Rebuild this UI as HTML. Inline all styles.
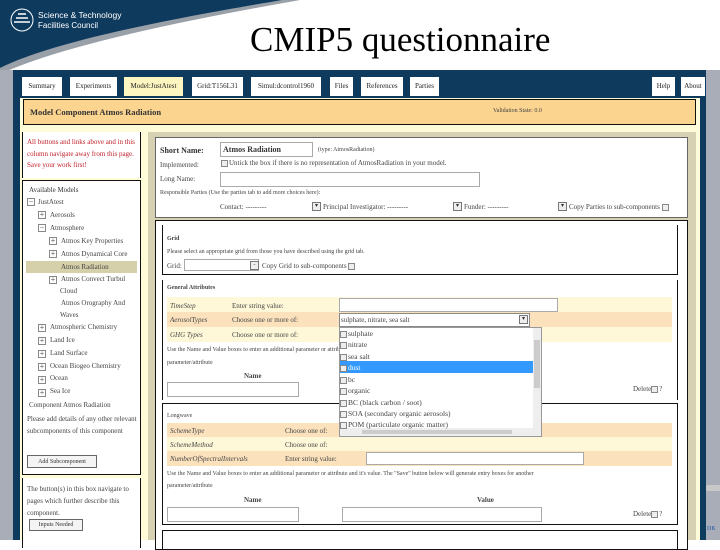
<!DOCTYPE html>
<html><head><meta charset="utf-8"><style>
*{margin:0;padding:0;box-sizing:border-box}
body{width:720px;height:540px;overflow:hidden;background:#fff;position:relative;font-family:"Liberation Serif",serif;font-size:7px;color:#333}
.a{position:absolute}
.nb{position:absolute;top:77px;height:19px;background:#fff;font-size:7px;line-height:19px;text-align:center;color:#222}
.t{position:absolute;font-size:7px;color:#444;white-space:nowrap}
.box{position:absolute;background:#fff;border:1.5px solid #111}
.inp{position:absolute;background:#fff;border:1px solid #aaa}
.dd{position:absolute;width:9px;height:9px;border:1px solid #777;background:#eee;font-size:6px;line-height:7px;text-align:center}
.cb{display:inline-block;width:7px;height:7px;border:1px solid #888;background:#eee;vertical-align:middle;margin-right:1px}
.pl{position:absolute;width:8px;height:8px;border:1px solid #888;font-size:8px;line-height:6px;text-align:center;color:#444}
</style></head><body>
<svg class="a" style="left:0;top:0" width="720" height="75">
<path d="M0,0 H300 C210,16 70,42 0,74 Z" fill="#9aa0a8"/>
<path d="M0,0 H282 C200,14 60,38 0,68 Z" fill="#0e3a5e"/>
<circle cx="22" cy="20" r="11" fill="none" stroke="#fff" stroke-width="1"/>
<path d="M14,22 h16 M16,18 h12 M18,14 h8" stroke="#fff" stroke-width="1.5"/>
<text x="38" y="18" fill="#fff" font-family="Liberation Sans" font-size="8.5">Science &amp; Technology</text>
<text x="38" y="28" fill="#fff" font-family="Liberation Sans" font-size="8">Facilities Council</text>
</svg>
<div class="a" style="left:250px;top:20px;font-size:35px;color:#000;font-family:'Liberation Serif',serif;white-space:nowrap">CMIP5 questionnaire</div>
<div class="a" style="left:0;top:70px;width:13px;height:470px;background:#a9adb8"></div>
<div class="a" style="left:706px;top:70px;width:14px;height:470px;background:#a9adb8"></div>
<div class="a" style="left:700px;top:485px;width:20px;height:6px;background:#c8c8c8"></div>
<div class="a" style="left:13px;top:70px;width:693px;height:470px;background:#0e3a5e"></div>
<div class="nb" style="left:22px;width:40px">Summary</div>
<div class="nb" style="left:70px;width:47px">Experiments</div>
<div class="nb" style="left:124px;width:59px;background:#fdf6c0">Model:JustAtest</div>
<div class="nb" style="left:192px;width:51px">Grid:T156L31</div>
<div class="nb" style="left:251px;width:70px">Simul:dcontrol1960</div>
<div class="nb" style="left:330px;width:23px">Files</div>
<div class="nb" style="left:361px;width:42px">References</div>
<div class="nb" style="left:410px;width:29px">Parties</div>
<div class="nb" style="left:652px;width:23px">Help</div>
<div class="nb" style="left:681px;width:24px">About</div>
<div class="a" style="left:20px;top:98px;width:680px;height:442px;background:#fefbd8"></div>
<div class="a" style="left:23px;top:99px;width:673px;height:26px;border:1.5px solid #111;background:#fbd48f"></div>
<div class="t" style="left:30px;top:107px;font-weight:bold;font-size:8.5px;color:#333">Model Component Atmos Radiation</div>
<div class="t" style="left:493px;top:108px;font-size:6px">Validation State: 0.0</div>
<!-- left -->
<div class="box" style="left:22px;top:132px;width:119px;height:46px;border-top:none;border-bottom:none;background:#fff"></div>
<div class="t" style="left:27px;top:137px;color:#c0202a;line-height:11.5px;white-space:normal;width:112px">All buttons and links above and in this column navigate away from this page. Save your work first!</div>
<div class="box" style="left:22px;top:180px;width:119px;height:295px"></div>
<div class="t" style="left:29px;top:186px;font-size:7px;color:#333">Available Models</div>
<div class="pl" style="left:27px;top:198px">−</div><div class="t" style="left:38px;top:198px">JustAtest</div>
<div class="pl" style="left:38px;top:211px">+</div><div class="t" style="left:50px;top:211px">Aerosols</div>
<div class="pl" style="left:38px;top:224px">−</div><div class="t" style="left:50px;top:224px">Atmosphere</div>
<div class="pl" style="left:49px;top:237px">+</div><div class="t" style="left:61px;top:237px">Atmos Key Properties</div>
<div class="pl" style="left:49px;top:250px">+</div><div class="t" style="left:61px;top:250px">Atmos Dynamical Core</div>
<div class="a" style="left:26px;top:261px;width:111px;height:12px;background:#d6d0aa"></div><div class="t" style="left:61px;top:263px">Atmos Radiation</div>
<div class="pl" style="left:49px;top:276px">+</div><div class="t" style="left:61px;top:275px">Atmos Convect Turbul</div>
<div class="t" style="left:60px;top:287px">Cloud</div>
<div class="t" style="left:61px;top:299px">Atmos Orography And</div>
<div class="t" style="left:60px;top:311px">Waves</div>
<div class="pl" style="left:38px;top:324px">+</div><div class="t" style="left:50px;top:323px">Atmospheric Chemistry</div>
<div class="pl" style="left:38px;top:337px">+</div><div class="t" style="left:50px;top:336px">Land Ice</div>
<div class="pl" style="left:38px;top:350px">+</div><div class="t" style="left:50px;top:349px">Land Surface</div>
<div class="pl" style="left:38px;top:363px">+</div><div class="t" style="left:50px;top:362px">Ocean Biogeo Chemistry</div>
<div class="pl" style="left:38px;top:376px">+</div><div class="t" style="left:50px;top:374px">Ocean</div>
<div class="pl" style="left:38px;top:389px">+</div><div class="t" style="left:50px;top:387px">Sea Ice</div>
<div class="t" style="left:29px;top:401px">Component Atmos Radiation</div>
<div class="t" style="left:27px;top:413px;line-height:12px;white-space:normal;width:110px">Please add details of any other relevant subcomponents of this component</div>
<div class="a" style="left:27px;top:455px;width:70px;height:13px;border:1px solid #666;background:#f4f4f4;font-size:6px;text-align:center;line-height:12px">Add Subcomponent</div>
<div class="box" style="left:22px;top:478px;width:119px;height:70px;border-top:none;border-bottom:none"></div>
<div class="t" style="left:27px;top:483px;line-height:12px;white-space:normal;width:112px">The button(s) in this box navigate to pages which further describe this component.</div>
<div class="a" style="left:29px;top:519px;width:54px;height:12px;border:1px solid #666;background:#f4f4f4;font-size:6px;text-align:center;line-height:11px">Inputs Needed</div>
<!-- main -->
<div class="a" style="left:148px;top:132px;width:548px;height:408px;background:#d6d1b2"></div>
<div class="box" style="left:155px;top:137px;width:533px;height:81px;border:1px solid #666"></div>
<div class="t" style="left:160px;top:146px;font-weight:bold;font-size:8px;color:#333">Short Name:</div>
<div class="inp" style="left:220px;top:142px;width:93px;height:15px"></div>
<div class="t" style="left:223px;top:145px;font-weight:bold;font-size:8px;color:#333">Atmos Radiation</div>
<div class="t" style="left:318px;top:147px;font-size:6px">(type: AtmosRadiation)</div>
<div class="t" style="left:160px;top:161px">Implemented:</div>
<div class="t" style="left:221px;top:159px"><span class="cb"></span>Untick the box if there is no representation of AtmosRadiation in your model.</div>
<div class="t" style="left:160px;top:175px">Long Name:</div>
<div class="inp" style="left:220px;top:172px;width:260px;height:15px"></div>
<div class="t" style="left:160px;top:190px;font-size:6px">Responsible Parties (Use the parties tab to add more choices here):</div>
<div class="t" style="left:220px;top:203px">Contact: ---------</div>
<div class="dd" style="left:312px;top:202px">▾</div><div class="t" style="left:323px;top:203px">Principal Investigator: ---------</div>
<div class="dd" style="left:453px;top:202px">▾</div><div class="t" style="left:464px;top:203px">Funder: ---------</div>
<div class="dd" style="left:558px;top:202px">▾</div><div class="t" style="left:569px;top:203px">Copy Parties to sub-components <span class="cb"></span></div>
<div class="box" style="left:155px;top:220px;width:533px;height:330px;border:1px solid #111"></div>
<div class="box" style="left:162px;top:225px;width:516px;height:50px;border-top:none;border-right:1.5px solid #111"></div>
<div class="t" style="left:167px;top:236px;font-size:6px;font-weight:bold">Grid</div>
<div class="t" style="left:167px;top:249px;font-size:6px">Please select an appropriate grid from those you have described using the grid tab.</div>
<div class="t" style="left:167px;top:262px">Grid:</div>
<div class="inp" style="left:184px;top:259px;width:75px;height:12px"></div><div class="dd" style="left:250px;top:261px">-</div>
<div class="t" style="left:262px;top:262px">Copy Grid to sub-components <span class="cb"></span></div>
<div class="box" style="left:162px;top:280px;width:516px;height:120px;border-top:none;border-bottom:none"></div>
<div class="t" style="left:167px;top:285px;font-size:6px;font-weight:bold">General Attributes</div>
<div class="a" style="left:167px;top:297px;width:505px;height:15px;background:#fff8d8"></div>
<div class="a" style="left:167px;top:312px;width:505px;height:15px;background:#fbe2bd"></div>
<div class="a" style="left:167px;top:327px;width:505px;height:15px;background:#fff8d8"></div>
<div class="t" style="left:170px;top:302px;font-style:italic">TimeStep</div><div class="t" style="left:232px;top:302px">Enter string value:</div>
<div class="t" style="left:170px;top:316px;font-style:italic">AerosolTypes</div><div class="t" style="left:232px;top:316px">Choose one or more of:</div>
<div class="t" style="left:170px;top:331px;font-style:italic">GHG Types</div><div class="t" style="left:232px;top:331px">Choose one or more of:</div>
<div class="inp" style="left:339px;top:298px;width:219px;height:14px"></div>
<div class="t" style="left:167px;top:347px;font-size:6px">Use the Name and Value boxes to enter an additional parameter or attribute and it's value. The "Save" button below will generate entry boxes for another</div>
<div class="t" style="left:167px;top:360px;font-size:6px">parameter/attribute</div>
<div class="t" style="left:244px;top:372px;font-weight:bold">Name</div>
<div class="inp" style="left:167px;top:382px;width:132px;height:15px"></div>
<div class="t" style="left:633px;top:385px">Delete<span class="cb"></span>?</div>
<div class="box" style="left:162px;top:403px;width:516px;height:122px"></div>
<div class="t" style="left:167px;top:413px;font-size:6px">Longwave</div>
<div class="a" style="left:167px;top:423px;width:505px;height:14px;background:#fbe2bd"></div>
<div class="a" style="left:167px;top:437px;width:505px;height:14px;background:#fff8d8"></div>
<div class="a" style="left:167px;top:451px;width:505px;height:15px;background:#fbe2bd"></div>
<div class="t" style="left:170px;top:427px;font-style:italic">SchemeType</div><div class="t" style="left:285px;top:427px">Choose one of:</div>
<div class="t" style="left:170px;top:441px;font-style:italic">SchemeMethod</div><div class="t" style="left:285px;top:441px">Choose one of:</div>
<div class="t" style="left:170px;top:455px;font-style:italic">NumberOfSpectralIntervals</div><div class="t" style="left:285px;top:455px">Enter string value:</div>
<div class="inp" style="left:366px;top:452px;width:218px;height:13px"></div>
<div class="t" style="left:167px;top:471px;font-size:6px">Use the Name and Value boxes to enter an additional parameter or attribute and it's value. The "Save" button below will generate entry boxes for another</div>
<div class="t" style="left:167px;top:483px;font-size:6px">parameter/attribute</div>
<div class="t" style="left:244px;top:496px;font-weight:bold">Name</div>
<div class="t" style="left:477px;top:496px;font-weight:bold">Value</div>
<div class="inp" style="left:167px;top:507px;width:132px;height:15px"></div>
<div class="inp" style="left:342px;top:507px;width:200px;height:15px"></div>
<div class="t" style="left:633px;top:510px">Delete<span class="cb"></span>?</div>
<div class="box" style="left:162px;top:530px;width:516px;height:20px"></div>
<!-- dropdown -->
<div class="inp" style="left:339px;top:313px;width:191px;height:14px;border-color:#888"></div>
<div class="t" style="left:341px;top:316px">sulphate, nitrate, sea salt</div>
<div class="dd" style="left:519px;top:315px">▾</div>
<div class="a" style="left:339px;top:327px;width:203px;height:110px;background:#fff;border:1px solid #999"></div>
<div class="a" style="left:533px;top:328px;width:8px;height:108px;background:#eee"></div>
<div class="a" style="left:534px;top:340px;width:6px;height:48px;background:#ccc"></div>
<div class="a" style="left:340px;top:428px;width:193px;height:8px;background:#eee"></div>
<div class="a" style="left:362px;top:430px;width:150px;height:4px;background:#ccc"></div>
<div class="a" style="left:340px;top:361px;width:193px;height:12px;background:#3399ff"></div>
<div class="t" style="left:340px;top:329px;font-size:7.5px"><span class="cb"></span>sulphate</div>
<div class="t" style="left:340px;top:340px;font-size:7.5px"><span class="cb"></span>nitrate</div>
<div class="t" style="left:340px;top:352px;font-size:7.5px"><span class="cb"></span>sea salt</div>
<div class="t" style="left:340px;top:363px;font-size:7.5px;color:#fff"><span class="cb"></span>dust</div>
<div class="t" style="left:340px;top:375px;font-size:7.5px"><span class="cb"></span>bc</div>
<div class="t" style="left:340px;top:386px;font-size:7.5px"><span class="cb"></span>organic</div>
<div class="t" style="left:340px;top:398px;font-size:7.5px"><span class="cb"></span>BC (black carbon / soot)</div>
<div class="t" style="left:340px;top:409px;font-size:7.5px"><span class="cb"></span>SOA (secondary organic aerosols)</div>
<div class="t" style="left:340px;top:420px;font-size:7.5px"><span class="cb"></span>POM (particulate organic matter)</div>
<div class="t" style="left:707px;top:526px;font-size:6px;color:#2255aa">DK</div>
</body></html>
